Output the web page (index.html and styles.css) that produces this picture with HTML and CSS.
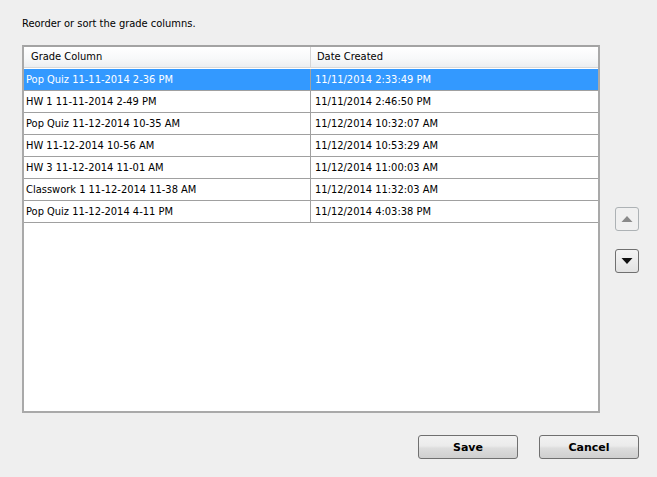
FILE: index.html
```html
<!DOCTYPE html>
<html>
<head>
<meta charset="utf-8">
<link rel="stylesheet" href="styles.css">
</head>
<body>
<div class="dialog">
  <div class="label">Reorder or sort the grade columns.</div>
  <div class="main">
    <div class="list">
      <div class="hdr">
        <div class="hcell c1">Grade Column</div>
        <div class="hcell c2">Date Created</div>
      </div>
      <div class="row sel"><div class="cell c1">Pop Quiz 11-11-2014 2-36 PM</div><div class="cell c2">11/11/2014 2:33:49 PM</div></div>
      <div class="row"><div class="cell c1">HW 1 11-11-2014 2-49 PM</div><div class="cell c2">11/11/2014 2:46:50 PM</div></div>
      <div class="row"><div class="cell c1">Pop Quiz 11-12-2014 10-35 AM</div><div class="cell c2">11/12/2014 10:32:07 AM</div></div>
      <div class="row"><div class="cell c1">HW 11-12-2014 10-56 AM</div><div class="cell c2">11/12/2014 10:53:29 AM</div></div>
      <div class="row"><div class="cell c1">HW 3 11-12-2014 11-01 AM</div><div class="cell c2">11/12/2014 11:00:03 AM</div></div>
      <div class="row"><div class="cell c1">Classwork 1 11-12-2014 11-38 AM</div><div class="cell c2">11/12/2014 11:32:03 AM</div></div>
      <div class="row"><div class="cell c1">Pop Quiz 11-12-2014 4-11 PM</div><div class="cell c2">11/12/2014 4:03:38 PM</div></div>
    </div>
    <div class="side">
      <button class="arrow disabled" aria-label="Move up">
        <svg width="12" height="8" viewBox="0 0 12 8"><polygon points="0.5,7 11.5,7 6,1" fill="#8a8a8a"/></svg>
      </button>
      <button class="arrow" aria-label="Move down">
        <svg width="12" height="8" viewBox="0 0 12 8"><polygon points="0.5,1 11.5,1 6,7" fill="#111"/></svg>
      </button>
    </div>
  </div>
  <div class="actions">
    <button class="btn">Save</button>
    <button class="btn">Cancel</button>
  </div>
</div>
</body>
</html>
```

FILE: styles.css
```css
html, body {
  margin: 0;
  padding: 0;
  background: #efefef;
  width: 657px;
  height: 477px;
  overflow: hidden;
}
.dialog {
  font-family: Tahoma, "DejaVu Sans Condensed", "Liberation Sans", sans-serif;
  font-size: 11px;
  color: #000;
  padding: 17px 18px 0 22px;
}
.label {
  line-height: 14px;
  height: 14px;
}
.main {
  display: flex;
  margin-top: 14px;
}
.list {
  width: 574px;
  height: 364px;
  background: #fff;
  border: 2px solid #a9a9a9;
  border-top-color: #a3a3a3;
}
.hdr {
  display: grid;
  grid-template-columns: 287px 1fr;
  height: 20px;
  background: linear-gradient(#ffffff, #f7f8f9 60%, #eceef0);
  border-bottom: 1px solid #d8d8d8;
  margin-bottom: 1px;
}
.hcell {
  line-height: 20px;
  white-space: nowrap;
}
.hcell.c1 {
  padding-left: 7px;
  border-right: 1px solid #d5d5d5;
}
.hcell.c2 {
  padding-left: 6px;
}
.row {
  display: grid;
  grid-template-columns: 287px 1fr;
  height: 21px;
  border-bottom: 1px solid #a0a0a0;
}
.cell {
  line-height: 21px;
  white-space: nowrap;
  overflow: hidden;
}
.cell.c1 {
  padding-left: 2px;
  border-right: 1px solid #a0a0a0;
}
.cell.c2 {
  padding-left: 4px;
}
.row.sel {
  background: #3399ff;
  color: #fff;
}
.side {
  display: flex;
  flex-direction: column;
  margin-left: 15px;
  padding-top: 162px;
  gap: 18px;
}
.arrow {
  width: 24px;
  height: 24px;
  padding: 0;
  margin: 0;
  border: 1px solid #707070;
  border-radius: 3px;
  background: linear-gradient(#f4f4f4, #ececec 50%, #e2e2e2);
  display: flex;
  align-items: center;
  justify-content: center;
}
.arrow.disabled {
  border-color: #adb2b5;
  background: #f0f0f0;
}
.actions {
  display: flex;
  justify-content: flex-end;
  gap: 21px;
  margin-top: 22px;
}
.btn {
  width: 100px;
  height: 24px;
  padding: 0;
  margin: 0;
  border: 1px solid #707070;
  border-radius: 3px;
  background: linear-gradient(#f2f2f2, #ebebeb 45%, #dddddd 55%, #cfcfcf);
  font-family: Tahoma, "DejaVu Sans", "Liberation Sans", sans-serif;
  font-size: 11px;
  font-weight: bold;
  color: #000;
}
```
